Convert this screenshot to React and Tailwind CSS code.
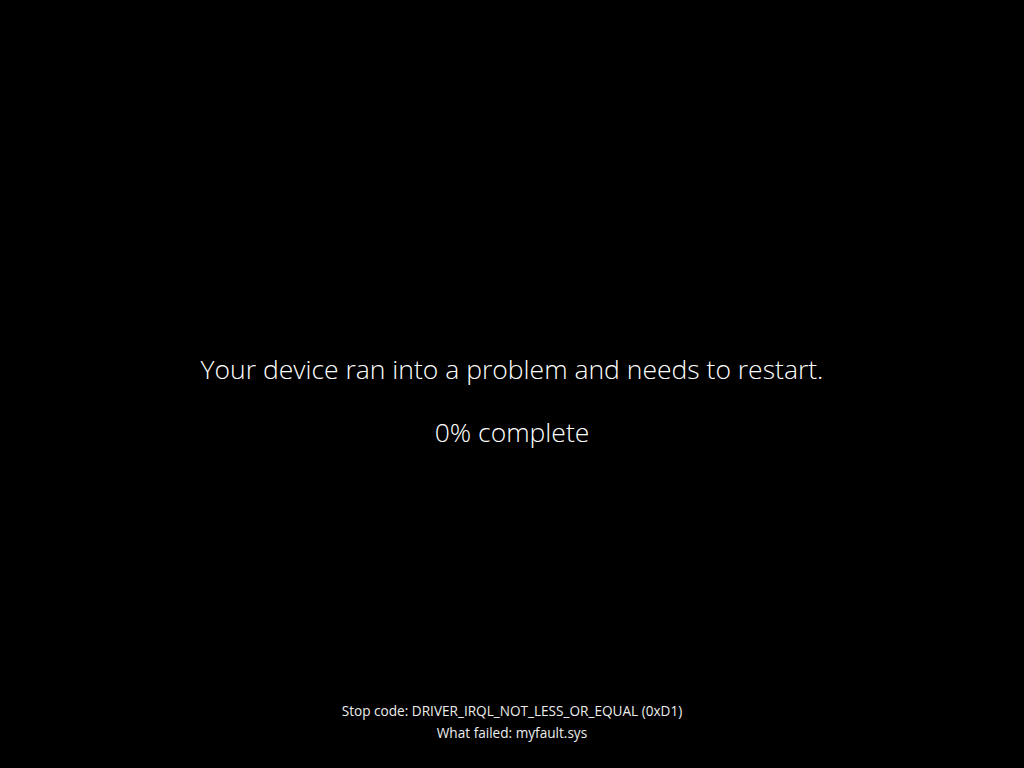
export default function App() {
  return (
    <div className="w-[1024px] h-[768px] bg-black text-white flex flex-col items-center">
      <div className="flex flex-col items-center pt-[351px] font-['Open_Sans',sans-serif] font-light">
        <div className="text-[26.5px] leading-[36px] text-white">Your device ran into a problem and needs to restart.</div>
        <div className="text-[26.5px] leading-[36px] mt-[27px] text-white">0% complete</div>
      </div>
      <div className="mt-auto mb-[24px] flex flex-col items-center font-['Open_Sans',sans-serif] text-[13.6px] leading-[22px] text-[#ededed]">
        <div>Stop code: DRIVER_IRQL_NOT_LESS_OR_EQUAL (0xD1)</div>
        <div>What failed: myfault.sys</div>
      </div>
    </div>
  );
}
